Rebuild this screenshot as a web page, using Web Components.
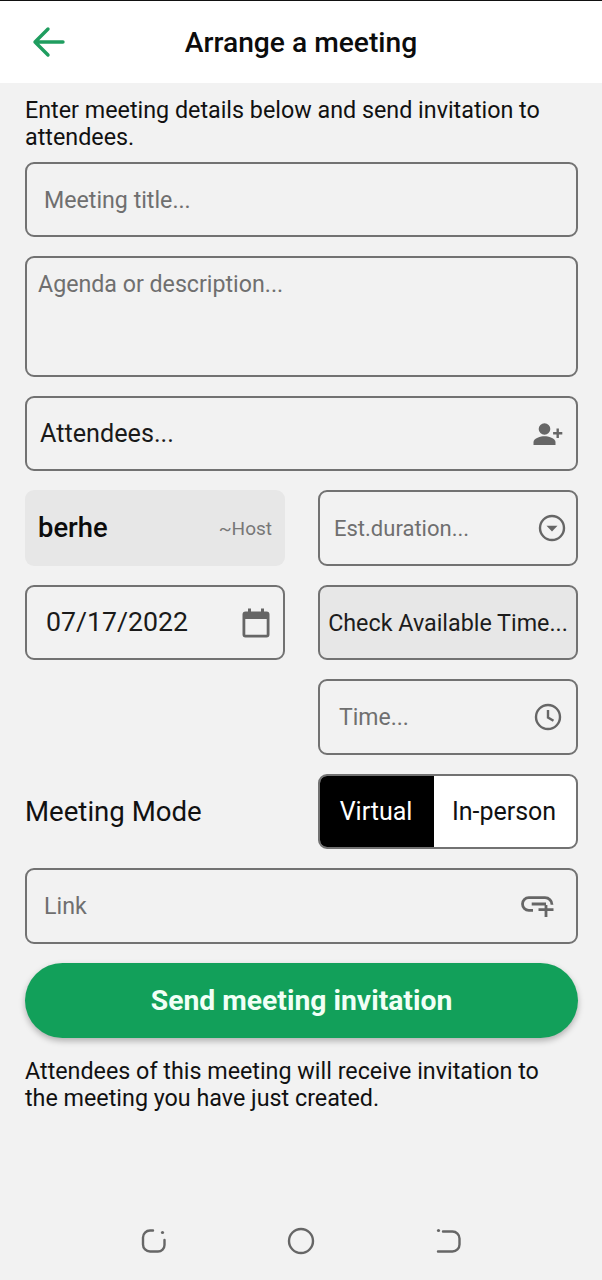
<!DOCTYPE html>
<html>
<head>
<meta charset="utf-8">
<title>Arrange a meeting</title>
<style>
    html, body { margin: 0; padding: 0; }
    body {
        width: 602px;
        height: 1280px;
        overflow: hidden;
        background: #f2f2f2;
        font-family: Roboto, "Liberation Sans", sans-serif;
        color: #111;
    }
</style>
</head>
<body>
<meeting-screen>
    <app-bar title="Arrange a meeting"></app-bar>
    <meeting-form></meeting-form>
    <nav-bar></nav-bar>
</meeting-screen>

<script>
const ICONS = {
    back: `<svg width="34" height="34" viewBox="0 0 34 34" fill="none" stroke="#1f9d5f" stroke-width="3.400" stroke-linecap="round" stroke-linejoin="round"><path d="M3 17H31M16 4 3 17 16 30"/></svg>`,
    person: `<svg width="30" height="24" viewBox="0 0 30 24" fill="#666"><circle cx="11.500" cy="7" r="5.800"/><path d="M0.500 23v-3c0-3.800 7.300-5.800 11-5.800s11 2 11 5.800v3z"/><path d="M23.500 6.500h2.400v3.600h3.400v2.400h-3.400v3.600h-2.400v-3.600h-3.400v-2.400h3.400z"/></svg>`,
    dropdown: `<svg width="28" height="28" viewBox="0 0 28 28"><circle cx="14" cy="14" r="12" fill="none" stroke="#666" stroke-width="2.400"/><path d="M8.500 11.800h11L14 17.500z" fill="#666"/></svg>`,
    calendar: `<svg width="28" height="30" viewBox="0 0 28 30" fill="#666"><path d="M6 0.500h3v3h10v-3h3v3h2.500A3 3 0 0 1 27.500 6.500v20a3 3 0 0 1-3 3h-21a3 3 0 0 1-3-3v-20a3 3 0 0 1 3-3H6zM3.300 11v15.500c0 .2.100.3.300.3h20.800c.2 0 .3-.1.300-.3V11z"/></svg>`,
    clock: `<svg width="28" height="28" viewBox="0 0 28 28" fill="none" stroke="#666" stroke-width="2.400"><circle cx="14" cy="14" r="12"/><path d="M14 7v7.500l5.500 3.300"/></svg>`,
    link: `<svg width="34" height="22" viewBox="0 0 34 22" fill="none" stroke="#666" stroke-width="2.800"><path d="M12 15.300H7.800a6.300 6.300 0 0 1 0-12.600H24a7 7 0 0 1 7 7"/><path d="M10.700 9H25M25 10v12M17.500 14.600h15"/></svg>`,
    recent: `<svg width="28" height="28" viewBox="0 0 28 28" fill="none" stroke="#666" stroke-width="2.400" stroke-linecap="round"><path d="M13 3.500H10A7 7 0 0 0 3 10.500v7a7 7 0 0 0 7 7h8a6.500 6.500 0 0 0 6.500-6.500v-5"/><circle cx="22.500" cy="5.500" r="1.600" fill="#666" stroke="none"/></svg>`,
    home: `<svg width="28" height="28" viewBox="0 0 28 28" fill="none" stroke="#666" stroke-width="2.400"><circle cx="14" cy="14" r="12"/></svg>`,
    ret: `<svg width="28" height="28" viewBox="0 0 28 28" fill="none" stroke="#666" stroke-width="2.400" stroke-linecap="round"><path d="M9 4.500h9.500a7 7 0 0 1 7 7v6a7 7 0 0 1-7 7H4"/><circle cx="4.500" cy="3.500" r="1.600" fill="#666" stroke="none"/></svg>`
};

class MeetingScreen extends HTMLElement {
    constructor(){
        super();
        this.shadowDOM = this.attachShadow({mode : "open"});
        this.shadowDOM.innerHTML = `
            <style>
                :host {
                    display: flex;
                    flex-direction: column;
                    width: 602px;
                    height: 1280px;
                    box-sizing: border-box;
                    border-top: 1px solid #111;
                }
            </style>
            <slot></slot>
        `;
    }
}

class AppBar extends HTMLElement {
    constructor(){
        super();
        this.shadowDOM = this.attachShadow({mode : "open"});
    }

    connectedCallback() {
        this.shadowDOM.innerHTML = `
            <style>
                :host {
                    display: flex;
                    align-items: center;
                    height: 82px;
                    background: #fff;
                    position: relative;
                    justify-content: center;
                }
                .back {
                    position: absolute;
                    left: 32px;
                    top: 24px;
                    line-height: 0;
                }
                h1 {
                    margin: 0;
                    font-size: 28.200px;
                    font-weight: 500;
                    color: #0c0c0c;
                }
            </style>
            <span class="back">${ICONS.back}</span>
            <h1>${this.getAttribute("title")}</h1>
        `;
    }
}

class FormField extends HTMLElement {
    constructor(){
        super();
        this.shadowDOM = this.attachShadow({mode : "open"});
        this.shadowDOM.innerHTML = `
            <style>
                :host {
                    display: flex;
                    align-items: center;
                    justify-content: space-between;
                    box-sizing: border-box;
                    height: 75.500px;
                    padding: 0 var(--pad-r, 12px) 0 var(--pad, 17px);
                    border: 2px solid #727272;
                    border-radius: 9px;
                    font-size: var(--size, 23.200px);
                    color: #6f6f6f;
                }
                :host([filled]) { color: #1a1a1a; }
                :host([tall]) {
                    height: 120.500px;
                    align-items: flex-start;
                    padding-top: 12px;
                }
                .text { position: relative; top: var(--lift, 0); }
                ::slotted([slot="icon"]) { display: flex; flex: none; }
            </style>
            <span class="text"><slot name="text"></slot></span>
            <slot name="icon"></slot>
        `;
    }
}

class HostChip extends HTMLElement {
    constructor(){
        super();
        this.shadowDOM = this.attachShadow({mode : "open"});
        this.shadowDOM.innerHTML = `
            <style>
                :host {
                    display: flex;
                    align-items: center;
                    justify-content: space-between;
                    box-sizing: border-box;
                    height: 75.500px;
                    padding: 0 13px;
                    background: #e7e7e7;
                    border-radius: 9px;
                }
                b { font-size: 27.400px; font-weight: 500; color: #0c0c0c; }
                span { font-size: 19px; color: #777; }
            </style>
            <b>berhe</b><span>~Host</span>
        `;
    }
}

class ModeSwitch extends HTMLElement {
    constructor(){
        super();
        this.shadowDOM = this.attachShadow({mode : "open"});
        this.shadowDOM.innerHTML = `
            <style>
                :host {
                    display: flex;
                    box-sizing: border-box;
                    height: 75.500px;
                    border: 2px solid #727272;
                    border-radius: 9px;
                    overflow: hidden;
                    background: #fff;
                    font-size: 25px;
                }
                div { display: flex; align-items: center; justify-content: center; }
                .on { box-sizing: border-box; width: 114px; padding-right: 2px; background: #000; color: #fff; }
                .off { flex: 1; padding-right: 2px; color: #111; }
            </style>
            <div class="on">Virtual</div>
            <div class="off">In-person</div>
        `;
    }
}

class MeetingForm extends HTMLElement {
    constructor(){
        super();
        this.shadowDOM = this.attachShadow({mode : "open"});
        this.shadowDOM.innerHTML = `
            <style>
                :host {
                    display: flex;
                    flex-direction: column;
                    flex: 1;
                    padding: 14px 24px 0 25px;
                }
                p {
                    margin: 0;
                    font-size: 23.300px;
                    line-height: 27px;
                    color: #111;
                }
                .fields {
                    display: flex;
                    flex-direction: column;
                    gap: 19px;
                    margin-top: 10.900px;
                }
                .row {
                    display: grid;
                    grid-template-columns: 260px 260px;
                    column-gap: 33px;
                    align-items: center;
                }
                .mode { font-size: 27.600px; color: #111; }
                .check {
                    display: flex;
                    align-items: center;
                    justify-content: center;
                    box-sizing: border-box;
                    height: 75.500px;
                    background: #e7e7e7;
                    border: 2px solid #727272;
                    border-radius: 9px;
                    font-size: 23.300px;
                    color: #1c1c1c;
                    white-space: nowrap;
                }
                .send {
                    display: flex;
                    align-items: center;
                    justify-content: center;
                    height: 75.500px;
                    border-radius: 38px;
                    background: #12a05a;
                    color: #f1fff6;
                    font-size: 28.300px;
                    font-weight: 700;
                    box-shadow: 0 3px 6px rgba(0,0,0,.28);
                }
                .note { margin-top: 19.500px; padding-right: 30px; }
            </style>
            <p>Enter meeting details below and send invitation to attendees.</p>
            <div class="fields">
                <form-field><span slot="text">Meeting title...</span></form-field>
                <form-field tall style="--pad:11px"><span slot="text">Agenda or description...</span></form-field>
                <form-field filled style="--pad:13px;--pad-r:13px;--size:25.200px"><span slot="text">Attendees...</span><span slot="icon">${ICONS.person}</span></form-field>
                <div class="row">
                    <host-chip></host-chip>
                    <form-field style="--pad:14px;--pad-r:10px;--size:22px"><span slot="text">Est.duration...</span><span slot="icon">${ICONS.dropdown}</span></form-field>
                </div>
                <div class="row">
                    <form-field filled style="--pad:19px;--pad-r:13px;--size:26.700px;--lift:-1px"><span slot="text">07/17/2022</span><span slot="icon">${ICONS.calendar}</span></form-field>
                    <div class="check">Check Available Time...</div>
                </div>
                <div class="row">
                    <span></span>
                    <form-field style="--pad:19px;--pad-r:14px;--size:23px"><span slot="text">Time...</span><span slot="icon">${ICONS.clock}</span></form-field>
                </div>
                <div class="row">
                    <span class="mode">Meeting Mode</span>
                    <mode-switch></mode-switch>
                </div>
                <form-field style="--pad-r:21px"><span slot="text">Link</span><span slot="icon">${ICONS.link}</span></form-field>
                <div class="send">Send meeting invitation</div>
            </div>
            <p class="note">Attendees of this meeting will receive invitation to the meeting you have just created.</p>
        `;
    }
}

class NavBar extends HTMLElement {
    constructor(){
        super();
        this.shadowDOM = this.attachShadow({mode : "open"});
        this.shadowDOM.innerHTML = `
            <style>
                :host {
                    display: grid;
                    grid-template-columns: 28px 28px 28px;
                    justify-content: center;
                    column-gap: 119px;
                    height: 78px;
                    padding-top: 2px;
                    align-items: center;
                }
                svg { display: block; }
            </style>
            ${ICONS.recent}${ICONS.home}${ICONS.ret}
        `;
    }
}

customElements.define("meeting-screen", MeetingScreen);
customElements.define("app-bar", AppBar);
customElements.define("form-field", FormField);
customElements.define("host-chip", HostChip);
customElements.define("mode-switch", ModeSwitch);
customElements.define("meeting-form", MeetingForm);
customElements.define("nav-bar", NavBar);
</script>
</body>
</html>
